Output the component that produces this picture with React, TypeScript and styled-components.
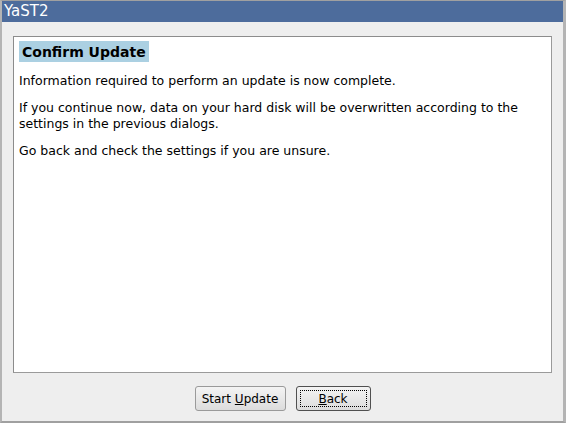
import React from 'react';
import styled, { createGlobalStyle } from 'styled-components';

const GlobalStyle = createGlobalStyle`
  html, body {
    margin: 0;
    padding: 0;
    background: #eeeeee;
  }
  body {
    font-family: "DejaVu Sans", "Liberation Sans", sans-serif;
  }
`

const Window = styled.div`
  width: 566px;
  height: 423px;
  box-sizing: border-box;
  display: flex;
  flex-direction: column;
  background: #eeeeee;
  border-left: 2px solid #b4b4b4;
  border-right: 3px solid #b4b4b4;
  border-top: 1px solid #a0a0a0;
  border-bottom: 2px solid #a0a0a0;
`

const TitleBar = styled.div`
  height: 21px;
  background: #4d6c9c;
  color: #ffffff;
  font-size: 15px;
  line-height: 21px;
  padding-left: 2px;
  flex-shrink: 0;
`

const Body = styled.div`
  flex: 1;
  display: flex;
  flex-direction: column;
  padding: 14px 11px 10px 11px;
`

const Panel = styled.div`
  flex: 1;
  background: #ffffff;
  border: 1px solid #8c8c8c;
  border-right-color: #9a9a9a;
  border-bottom-color: #9a9a9a;
  padding: 4px 5px;
  color: #000000;
  font-size: 12.5px;
`

const Heading = styled.div`
  display: inline-block;
  background: #abd0e2;
  font-weight: bold;
  font-size: 14px;
  line-height: 16px;
  padding: 3px 3px 2px 3px;
  margin-bottom: 11px;
`

const Para = styled.p`
  margin: 0 0 11px 0;
  line-height: 16px;
`

const ButtonRow = styled.div`
  display: flex;
  justify-content: center;
  gap: 10px;
  padding-top: 13px;
`

const Button = styled.button<{ $default?: boolean }>`
  height: 25px;
  padding: 0 4px;
  min-width: ${p => (p.$default ? '75px' : '91px')};
  font-family: "DejaVu Sans", "Liberation Sans", sans-serif;
  font-size: 12px;
  color: #000000;
  background: linear-gradient(#f4f4f4, #dcdcdc);
  border: 1px solid ${p => (p.$default ? '#505050' : '#9a9a9a')};
  border-radius: 3px;
  position: relative;
  box-sizing: border-box;
  u { text-decoration: underline; }
`

const FocusRing = styled.span`
  position: absolute;
  left: 3px;
  right: 3px;
  top: 3px;
  bottom: 3px;
  border: 1px dotted #000000;
`

const App: React.FC = () => {
  return <>
    <GlobalStyle />
    <Window>
      <TitleBar>YaST2</TitleBar>
      <Body>
        <Panel>
          <Heading>Confirm Update</Heading>
          <Para>Information required to perform an update is now complete.</Para>
          <Para>If you continue now, data on your hard disk will be overwritten according to the settings in the previous dialogs.</Para>
          <Para>Go back and check the settings if you are unsure.</Para>
        </Panel>
        <ButtonRow>
          <Button>Start <u>U</u>pdate</Button>
          <Button $default>
            <FocusRing />
            <u>B</u>ack
          </Button>
        </ButtonRow>
      </Body>
    </Window>
  </>;
}

export default App;
